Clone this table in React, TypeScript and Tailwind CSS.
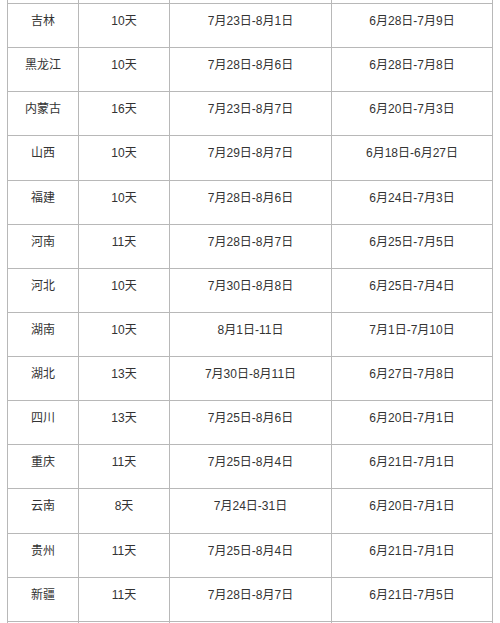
import React from "react";

const rows: [string, string, string, string][] = [
  ["吉林", "10天", "7月23日-8月1日", "6月28日-7月9日"],
  ["黑龙江", "10天", "7月28日-8月6日", "6月28日-7月8日"],
  ["内蒙古", "16天", "7月23日-8月7日", "6月20日-7月3日"],
  ["山西", "10天", "7月29日-8月7日", "6月18日-6月27日"],
  ["福建", "10天", "7月28日-8月6日", "6月24日-7月3日"],
  ["河南", "11天", "7月28日-8月7日", "6月25日-7月5日"],
  ["河北", "10天", "7月30日-8月8日", "6月25日-7月4日"],
  ["湖南", "10天", "8月1日-11日", "7月1日-7月10日"],
  ["湖北", "13天", "7月30日-8月11日", "6月27日-7月8日"],
  ["四川", "13天", "7月25日-8月6日", "6月20日-7月1日"],
  ["重庆", "11天", "7月25日-8月4日", "6月21日-7月1日"],
  ["云南", "8天", "7月24日-31日", "6月20日-7月1日"],
  ["贵州", "11天", "7月25日-8月4日", "6月21日-7月1日"],
  ["新疆", "11天", "7月28日-8月7日", "6月21日-7月5日"],
];

const cols = "grid grid-cols-[71px_91px_162px_161px]";
const cell = "border-r border-b border-[#b8b8b8] text-center";

export default function App() {
  return (
    <div
      className="w-[500px] h-[623px] bg-white overflow-hidden text-[12px] text-[#333333]"
      style={{ fontFamily: '"Liberation Sans", "Noto Sans CJK SC", sans-serif' }}
    >
      <div className="ml-[7px] w-[486px] border-l border-[#b8b8b8]">
        <div className={cols}>
          {[0, 1, 2, 3].map((i) => (
            <div key={i} className={`${cell} h-[4px]`} />
          ))}
        </div>
        {rows.map((r, idx) => (
          <div key={idx} className={cols}>
            {r.map((t, i) => (
              <div key={i} className={`${cell} h-[44.14px] pt-[8px] leading-[19px]`}>
                {t}
              </div>
            ))}
          </div>
        ))}
        <div className={cols}>
          {[0, 1, 2, 3].map((i) => (
            <div key={i} className="border-r border-[#b8b8b8] h-[20px]" />
          ))}
        </div>
      </div>
    </div>
  );
}
